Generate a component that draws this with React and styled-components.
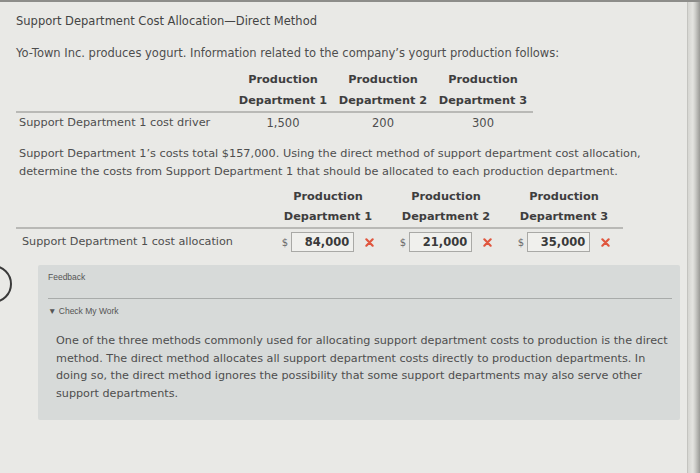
import styled, { createGlobalStyle } from 'styled-components'

const GlobalStyle = createGlobalStyle`
	html, body {
		margin: 0;
		padding: 0;
		background: #e8e8e5;
	}
	body {
		font-family: "DejaVu Sans", Verdana, sans-serif;
		color: #4c4c4c;
	}
`

const Screen = styled.div`
	width: 700px;
	height: 473px;
	display: flex;
	border-top: 2px solid #8d8d8a;
	box-sizing: border-box;
	overflow: hidden;
	background: #e9e9e6;
`

const Page = styled.div`
	flex: 1;
	padding: 0 0 0 16px;
	position: relative;
`

const Bezel = styled.div`
	width: 12px;
	background: linear-gradient(to right, #d6d6d2 0, #e4e4e0 40%, #cfcfcb 60%, #9a9a96 100%);
	border-left: 1px solid #c4c4c0;
`

const Title = styled.h1`
	margin: 11px 0 0;
	font-size: 11.5px;
	line-height: 16px;
	font-weight: normal;
	color: #444;
`

const Text = styled.p`
	margin: ${(p) => p.margin || '0'};
	font-size: ${(p) => p.size || '11.5px'};
	line-height: ${(p) => p.lh || '18px'};
	padding-left: ${(p) => p.indent || '0'};
	color: #4e4e4e;
`

const Table = styled.div`
	display: grid;
	grid-template-columns: ${(p) => p.cols};
	width: ${(p) => p.width};
	margin-top: ${(p) => p.top};
`

const HeadCell = styled.div`
	font-weight: bold;
	font-size: 11.3px;
	line-height: ${(p) => p.lh};
	text-align: center;
	color: #3e3e3e;
	padding-bottom: ${(p) => p.pb || '0'};
	border-bottom: 2px solid #b9b9b6;
	white-space: nowrap;
`

const Rule = styled.div`
	border-bottom: 2px solid #b9b9b6;
`

const LabelCell = styled.div`
	font-size: ${(p) => p.size || '11.5px'};
	line-height: ${(p) => p.h};
	padding-left: ${(p) => p.indent};
	color: #4e4e4e;
	white-space: nowrap;
`

const ValueCell = styled.div`
	font-size: 11.5px;
	line-height: ${(p) => p.h};
	text-align: center;
	color: #4e4e4e;
`

const InputCell = styled.div`
	display: flex;
	align-items: center;
	justify-content: center;
	gap: 3px;
	height: 26px;
`

const Dollar = styled.span`
	font-size: 10px;
	color: #6a6a6a;
`

const AmountBox = styled.div`
	width: 63px;
	height: 20px;
	box-sizing: border-box;
	border: 1px solid #a9a9a6;
	background: #f0f0ed;
	font-weight: bold;
	font-size: 11.5px;
	line-height: 18px;
	text-align: right;
	padding-right: 4px;
	color: #3a3a3a;
	margin-right: 8px;
`

const Cross = styled.svg`
	width: 9px;
	height: 9px;
`

const FeedbackRow = styled.div`
	position: relative;
	margin: 10px 0 0 22px;
	width: 642px;
`

const Toggle = styled.div`
	position: absolute;
	left: -64px;
	top: 0;
	width: 34px;
	height: 34px;
	border: 2px solid #3a3a3a;
	border-radius: 50%;
`

const Panel = styled.div`
	background: #d7dad9;
	padding: 7px 8px 17px 10px;
	border-radius: 2px;
`

const SmallLabel = styled.div`
	font-family: "Liberation Sans", Arial, sans-serif;
	font-size: 8.5px;
	line-height: 11px;
	color: #555;
	padding-bottom: ${(p) => p.pb || '0'};
	margin-top: ${(p) => p.mt || '0'};
	border-bottom: ${(p) => (p.rule ? '1px solid #a8abaa' : 'none')};
`

const X = () => (
	<Cross viewBox="0 0 10 10">
		<path d="M1.5 1.5 L8.5 8.5 M8.5 1.5 L1.5 8.5" stroke="#e0563e" strokeWidth="2.4" strokeLinecap="round" />
	</Cross>
)

const allocations = ['84,000', '21,000', '35,000']

const App = () => {
	return (
		<Screen>
			<GlobalStyle />
			<Page>
				<Title>Support Department Cost Allocation—Direct Method</Title>
				<Text margin="15px 0 0">Yo-Town Inc. produces yogurt. Information related to the company’s yogurt production follows:</Text>

				<Table cols="217px 100px 100px 100px" width="517px" top="8px">
					<Rule />
					{[1, 2, 3].map((n) => (
						<HeadCell key={n} lh="20.5px">Production<br />Department {n}</HeadCell>
					))}
					<LabelCell h="20px" indent="3px" size="11.3px">Support Department 1 cost driver</LabelCell>
					<ValueCell h="20px">1,500</ValueCell>
					<ValueCell h="20px">200</ValueCell>
					<ValueCell h="20px">300</ValueCell>
				</Table>

				<Text margin="12px 0 0" indent="3px" size="11.3px">
					Support Department 1’s costs total $157,000. Using the direct method of support department cost allocation,<br />
					determine the costs from Support Department 1 that should be allocated to each production department.
				</Text>

				<Table cols="253px 118px 118px 118px" width="607px" top="6px">
					<Rule />
					{[1, 2, 3].map((n) => (
						<HeadCell key={n} lh="20px">Production<br />Department {n}</HeadCell>
					))}
					<LabelCell h="26px" indent="6px" size="11.2px">Support Department 1 cost allocation</LabelCell>
					{allocations.map((v) => (
						<InputCell key={v}>
							<Dollar>$</Dollar>
							<AmountBox>{v}</AmountBox>
							<X />
						</InputCell>
					))}
				</Table>

				<FeedbackRow>
					<Toggle />
					<Panel>
						<SmallLabel rule pb="15px">Feedback</SmallLabel>
						<SmallLabel mt="7px">▼ Check My Work</SmallLabel>
						<Text margin="15px 0 0" indent="8px" lh="17.7px" size="11.2px">
							One of the three methods commonly used for allocating support department costs to production is the direct method. The direct method allocates all support department costs directly to production departments. In doing so, the direct method ignores the possibility that some support departments may also serve other support departments.
						</Text>
					</Panel>
				</FeedbackRow>
			</Page>
			<Bezel />
		</Screen>
	)
}

export default App
